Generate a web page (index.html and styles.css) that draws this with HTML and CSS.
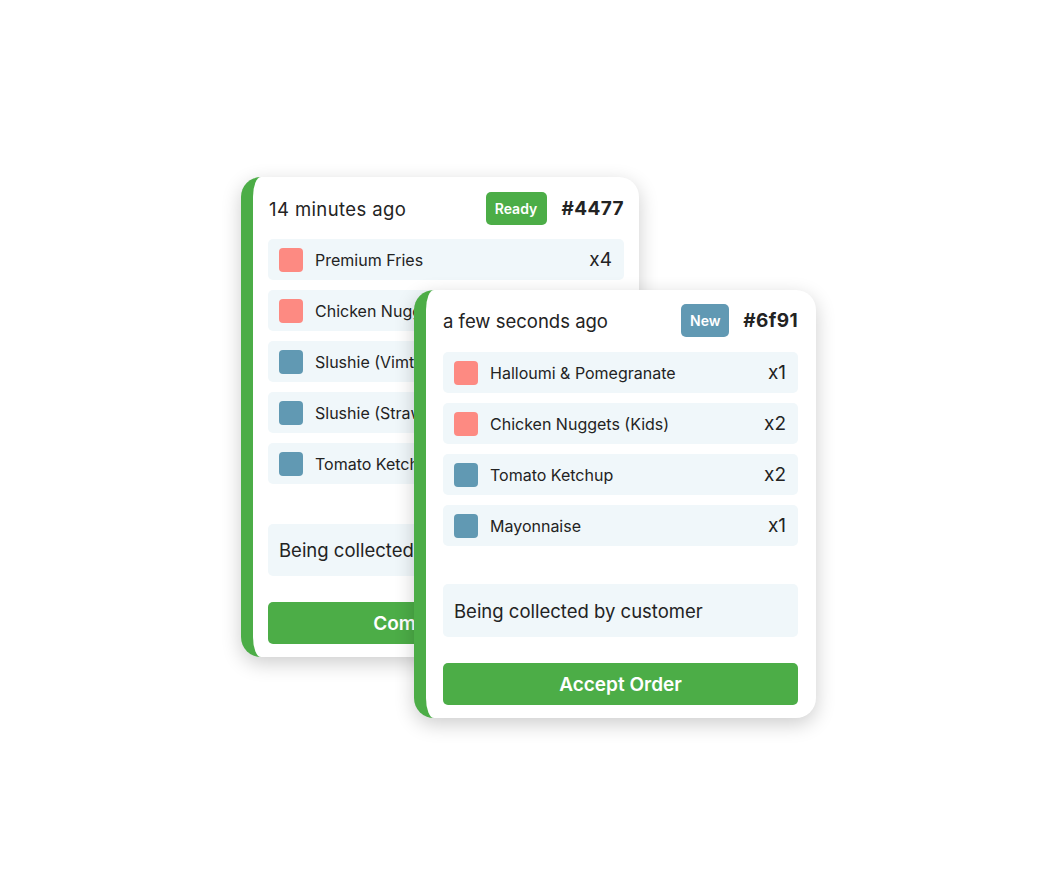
FILE: index.html
```html
<!DOCTYPE html>
<html>
<head>
<meta charset="utf-8">
<link rel="stylesheet" href="styles.css">
</head>
<body>
<div class="stage">
  <div class="stack">
    <div class="card card-back">
      <div class="head">
        <span class="time">14 minutes ago</span>
        <span class="badge badge-ready">Ready</span>
        <span class="num">#4477</span>
      </div>
      <div class="items">
        <div class="item"><span class="sq red"></span><span class="name">Premium Fries</span><span class="qty">x4</span></div>
        <div class="item"><span class="sq red"></span><span class="name">Chicken Nuggets</span></div>
        <div class="item"><span class="sq blue"></span><span class="name">Slushie (Vimto)</span></div>
        <div class="item"><span class="sq blue"></span><span class="name">Slushie (Strawberry)</span></div>
        <div class="item"><span class="sq blue"></span><span class="name">Tomato Ketchup</span></div>
      </div>
      <div class="note">Being collected by customer</div>
      <button class="btn">Complete Order</button>
    </div>
    <div class="card card-front">
      <div class="head">
        <span class="time">a few seconds ago</span>
        <span class="badge badge-new">New</span>
        <span class="num">#6f91</span>
      </div>
      <div class="items">
        <div class="item"><span class="sq red"></span><span class="name">Halloumi &amp; Pomegranate</span><span class="qty">x1</span></div>
        <div class="item"><span class="sq red"></span><span class="name">Chicken Nuggets (Kids)</span><span class="qty">x2</span></div>
        <div class="item"><span class="sq blue"></span><span class="name">Tomato Ketchup</span><span class="qty">x2</span></div>
        <div class="item"><span class="sq blue"></span><span class="name">Mayonnaise</span><span class="qty">x1</span></div>
      </div>
      <div class="note">Being collected by customer</div>
      <button class="btn">Accept Order</button>
    </div>
  </div>
</div>
</body>
</html>
```
FILE: styles.css
```css
* { box-sizing: border-box; }
html, body { margin: 0; padding: 0; background: #ffffff; }
body {
  font-family: Inter, "Noto Sans", "Liberation Sans", sans-serif;
  color: #232323;
  width: 1055px;
  height: 896px;
  overflow: hidden;
}
.stage {
  padding: 177px 0 0 241px;
}
.stack {
  display: grid;
}
.card {
  grid-area: 1 / 1;
  background: #fff;
  border-left: 12px solid #4cad47;
  border-radius: 20px;
  box-shadow: 0 6px 20px rgba(0, 0, 0, 0.2);
  display: flex;
  flex-direction: column;
}
.card-back {
  width: 398px;
  height: 480px;
  padding: 15px 15px 0 15px;
  align-self: start;
  justify-self: start;
}
.card-front {
  width: 402px;
  height: 428px;
  margin: 113px 0 0 173px;
  padding: 14px 18px 0 17px;
  align-self: start;
  justify-self: start;
}
.card-front .head { margin-bottom: 15px; }
.head {
  display: flex;
  align-items: center;
  height: 33px;
  margin-bottom: 14px;
}
.time {
  font-size: 18.5px;
  flex: 1;
  letter-spacing: 0;
}
.card-back .time { margin-left: 1px; letter-spacing: 0.4px; }
.badge {
  height: 33px;
  border-radius: 5px;
  color: #fff;
  font-size: 14px;
  font-weight: 600;
  display: flex;
  align-items: center;
  justify-content: center;
}
.badge-ready { width: 61px; background: #4cad47; margin-right: 1px; }
.badge-new { width: 48px; background: #6199b3; }
.num {
  font-size: 19px;
  font-weight: 700;
  margin-left: 14px;
  letter-spacing: 0.4px;
}
.items {
  display: flex;
  flex-direction: column;
  gap: 10px;
}
.item {
  height: 41px;
  background: #f0f7fa;
  border-radius: 5px;
  display: flex;
  align-items: center;
  padding: 0 12px 0 11px;
  overflow: hidden;
  white-space: nowrap;
}
.sq {
  width: 24px;
  height: 24px;
  border-radius: 4px;
  flex: none;
  margin-right: 12px;
}
.sq.red { background: #fd8a82; }
.sq.blue { background: #6199b3; }
.name {
  font-size: 16px;
  flex: 1;
}
.qty {
  font-size: 19px;
  font-weight: 400;
}
.card-back .note { margin-top: 40px; height: 52px; }
.card-front .note { margin-top: 38px; height: 53px; }
.note {
  background: #f0f7fa;
  border-radius: 5px;
  display: flex;
  align-items: center;
  padding: 0 11px;
  font-size: 18.5px;
  white-space: nowrap;
  overflow: hidden;
}
.btn {
  margin-top: 26px;
  height: 42px;
  border: none;
  border-radius: 5px;
  background: #4cad47;
  color: #fff;
  font-family: inherit;
  font-size: 19px;
  font-weight: 600;
  white-space: nowrap;
}
```
